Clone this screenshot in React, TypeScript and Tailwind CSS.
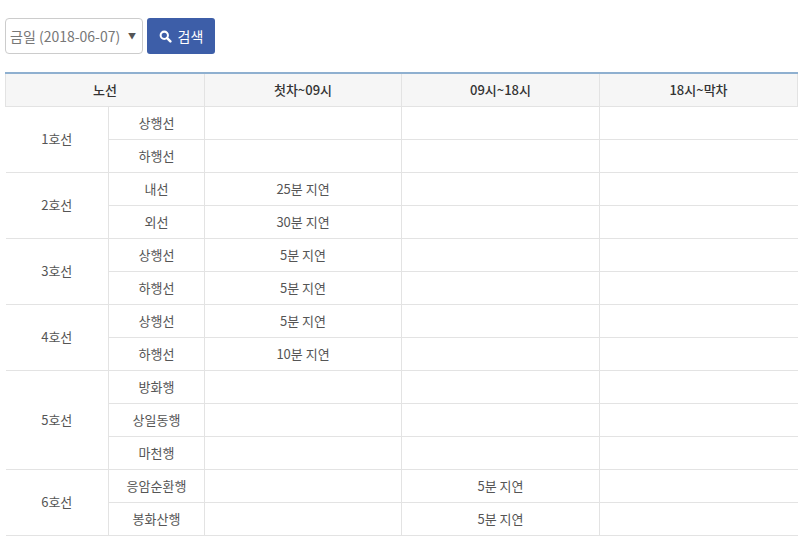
const groups: [string, [string, string, string][]][] = [
  ["1호선", [["상행선", "", ""], ["하행선", "", ""]]],
  ["2호선", [["내선", "25분 지연", ""], ["외선", "30분 지연", ""]]],
  ["3호선", [["상행선", "5분 지연", ""], ["하행선", "5분 지연", ""]]],
  ["4호선", [["상행선", "5분 지연", ""], ["하행선", "10분 지연", ""]]],
  ["5호선", [["방화행", "", ""], ["상일동행", "", ""], ["마천행", "", ""]]],
  ["6호선", [["응암순환행", "", "5분 지연"], ["봉화산행", "", "5분 지연"]]],
];

export default function App() {
  const td = "border border-[#e3e3e3] h-[33px] p-0 text-center align-middle";
  return (
    <div className="w-[800px] h-[536px] overflow-hidden bg-white text-[13px] text-[#555]" style={{ fontFamily: '"Noto Sans CJK KR", "Liberation Sans", sans-serif' }}>
      <div className="flex gap-[4px] pt-[18px] pl-[5px]">
        <div className="w-[138px] h-[36px] border border-[#ccc] rounded-[4px] flex items-center justify-between px-[4px] text-[#777] text-[14px]">
          <span>금일 (2018-06-07)</span>
          <span className="text-[8px] text-[#555] mr-[2px]">▼</span>
        </div>
        <div className="w-[68px] h-[36px] bg-[#3d5ea8] rounded-[3px] flex items-center justify-center gap-[6px] text-white text-[14px]">
          <svg width="13" height="13" viewBox="0 0 16 16"><circle cx="6.5" cy="6.5" r="4.5" fill="none" stroke="white" strokeWidth="2.5"/><path d="M10 10l4 4" stroke="white" strokeWidth="3" strokeLinecap="round"/></svg>
          <span>검색</span>
        </div>
      </div>
      <table className="mt-[18px] ml-[5px] w-[792px] border-collapse border-t-2 border-t-[#8fb0d0] table-fixed">
        <colgroup>
          <col className="w-[103px]" /><col className="w-[96px]" /><col className="w-[197px]" /><col className="w-[198px]" /><col className="w-[198px]" />
        </colgroup>
        <thead>
          <tr className="bg-[#f6f6f6] text-[#333]">
            <th colSpan={2} className={td + " font-medium border-t-0"}>노선</th>
            <th className={td + " font-medium border-t-0"}>첫차~09시</th>
            <th className={td + " font-medium border-t-0"}>09시~18시</th>
            <th className={td + " font-medium border-t-0"}>18시~막차</th>
          </tr>
        </thead>
        <tbody>
          {groups.map(([name, rows]) =>
            rows.map((r, i) => (
              <tr key={name + i}>
                {i === 0 && <td rowSpan={rows.length} className={td + " border-l-0"}>{name}</td>}
                <td className={td}>{r[0]}</td>
                <td className={td}>{r[1]}</td>
                <td className={td}>{r[2]}</td>
                <td className={td + " border-r-0"}></td>
              </tr>
            ))
          )}
        </tbody>
      </table>
    </div>
  );
}
